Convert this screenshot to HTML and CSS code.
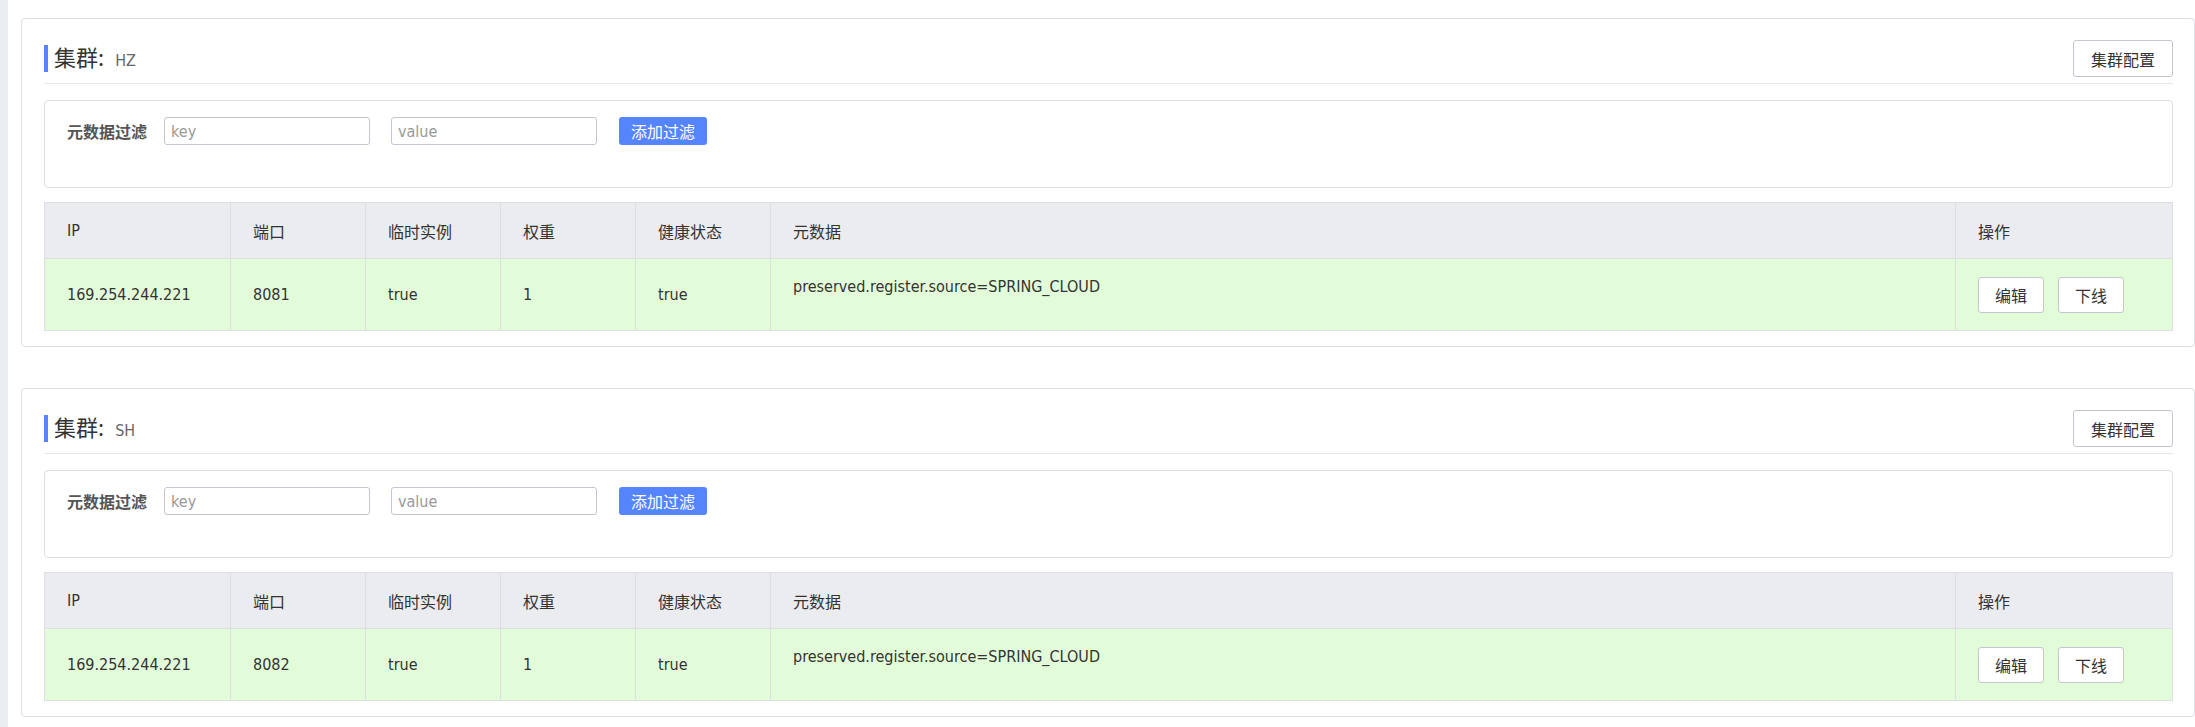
FILE: index.html
```html
<!DOCTYPE html>
<html lang="zh-CN">
<head>
<meta charset="utf-8">
<title>实例列表</title>
<link rel="stylesheet" href="styles.css">
</head>
<body>
<div class="strip"></div>
<main class="main">
  <section class="card">
    <div class="card-head">
      <h3 class="title">集群:<span class="cluster">HZ</span></h3>
      <button class="btn">集群配置</button>
    </div>
    <div class="filter">
      <span class="filter-label">元数据过滤</span>
      <input class="inp" placeholder="key">
      <input class="inp" placeholder="value">
      <button class="btn-primary">添加过滤</button>
    </div>
    <table class="tbl">
      <colgroup>
        <col class="c-ip"><col class="c-s"><col class="c-s"><col class="c-s"><col class="c-s"><col><col class="c-op">
      </colgroup>
      <thead>
        <tr><th>IP</th><th>端口</th><th>临时实例</th><th>权重</th><th>健康状态</th><th>元数据</th><th>操作</th></tr>
      </thead>
      <tbody>
        <tr>
          <td>169.254.244.221</td><td>8081</td><td>true</td><td>1</td><td>true</td>
          <td class="meta">preserved.register.source=SPRING_CLOUD</td>
          <td><div class="ops"><button class="btn btn-sm">编辑</button><button class="btn btn-sm">下线</button></div></td>
        </tr>
      </tbody>
    </table>
  </section>

  <section class="card">
    <div class="card-head">
      <h3 class="title">集群:<span class="cluster">SH</span></h3>
      <button class="btn">集群配置</button>
    </div>
    <div class="filter">
      <span class="filter-label">元数据过滤</span>
      <input class="inp" placeholder="key">
      <input class="inp" placeholder="value">
      <button class="btn-primary">添加过滤</button>
    </div>
    <table class="tbl">
      <colgroup>
        <col class="c-ip"><col class="c-s"><col class="c-s"><col class="c-s"><col class="c-s"><col><col class="c-op">
      </colgroup>
      <thead>
        <tr><th>IP</th><th>端口</th><th>临时实例</th><th>权重</th><th>健康状态</th><th>元数据</th><th>操作</th></tr>
      </thead>
      <tbody>
        <tr>
          <td>169.254.244.221</td><td>8082</td><td>true</td><td>1</td><td>true</td>
          <td class="meta">preserved.register.source=SPRING_CLOUD</td>
          <td><div class="ops"><button class="btn btn-sm">编辑</button><button class="btn btn-sm">下线</button></div></td>
        </tr>
      </tbody>
    </table>
  </section>
</main>
</body>
</html>
```

FILE: styles.css
```css
* { box-sizing: border-box; }
html, body { margin: 0; padding: 0; background: #fff; }
body {
  display: flex;
  min-height: 727px;
  font-family: "DejaVu Sans Condensed", "Noto Sans CJK SC", sans-serif;
  font-size: 16px;
  color: #333;
}
.strip { width: 8px; flex: none; background: #eaedf1; }
.main { flex: 1; padding: 18px 0 10px 13px; min-width: 0; }

.card {
  border: 1px solid #dcdee3;
  border-radius: 4px;
  padding: 0 21px 15px 22px;
  margin-bottom: 41px;
  background: #fff;
}
.card:last-child { margin-bottom: 0; }

.card-head {
  display: flex;
  align-items: center;
  justify-content: space-between;
  padding: 21px 0 6px;
  border-bottom: 1px solid #e6e7eb;
}
.title {
  margin: 0;
  font-weight: normal;
  font-size: 22px;
  line-height: 22px;
  color: #333;
  border-left: 4px solid #5584ff;
  padding-left: 6px;
  font-family: "Noto Sans CJK SC", sans-serif;
}
.cluster {
  font-family: "DejaVu Sans Condensed", sans-serif;
  font-size: 16px;
  color: #666;
  margin-left: 11px;
}

.btn {
  font-family: "Noto Sans CJK SC", sans-serif;
  font-size: 16px;
  height: 37px;
  padding: 0 17px;
  border: 1px solid #c4c6cf;
  border-radius: 3px;
  background: #fff;
  color: #333;
  line-height: 1;
}
.btn-sm { height: 36px; padding: 0 16px; }

.filter {
  margin-top: 16px;
  border: 1px solid #dcdee3;
  border-radius: 4px;
  padding: 16px 22px 42px;
  display: flex;
  align-items: center;
}
.filter-label {
  font-family: "Noto Sans CJK SC", sans-serif;
  font-weight: bold;
  color: #555;
  font-size: 16px;
  margin-right: 17px;
}
.inp {
  width: 206px;
  height: 28px;
  border: 1px solid #c4c6cf;
  border-radius: 3px;
  padding: 0 6px;
  font-family: "DejaVu Sans Condensed", "Noto Sans CJK SC", sans-serif;
  font-size: 16px;
  color: #333;
  margin-right: 21px;
  outline: none;
}
.inp::placeholder { color: #999; }
.btn-primary {
  font-family: "Noto Sans CJK SC", sans-serif;
  font-size: 16px;
  height: 28px;
  width: 88px;
  padding: 0;
  margin-left: 1px;
  border: none;
  border-radius: 3px;
  background: #5584ff;
  color: #fff;
  line-height: 1;
}

.tbl {
  margin-top: 14px;
  width: 100%;
  border-collapse: collapse;
  table-layout: fixed;
}
.c-ip { width: 186px; }
.c-s { width: 135px; }
.c-op { width: 217px; }
.tbl th, .tbl td {
  border: 1px solid #dcdee3;
  text-align: left;
  padding: 0 22px;
  font-weight: normal;
  white-space: nowrap;
}
.tbl th {
  background: #ebecf0;
  height: 56px;
  color: #333;
  font-family: "Noto Sans CJK SC", sans-serif;
}
.tbl th:first-child { font-family: "DejaVu Sans Condensed", sans-serif; }
.tbl td {
  background: #e2fcda;
  height: 72px;
  color: #333;
}
.tbl td.meta { vertical-align: top; padding-top: 18px; line-height: 20px; }
.ops { display: flex; gap: 14px; }
```
